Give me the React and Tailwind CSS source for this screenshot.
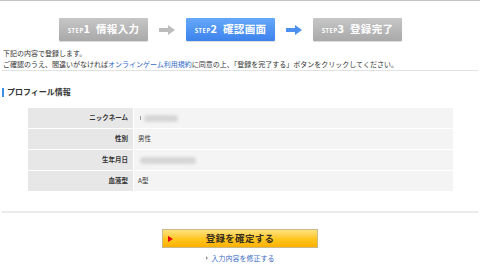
import React from 'react';

const font = { fontFamily: '"Noto Sans CJK JP", "Noto Sans", sans-serif' };

function Arrow({ color }) {
  return (
    <svg width="16" height="10" viewBox="0 0 16 10" className="block">
      <path d="M0 3h9V0l7 5-7 5V7H0z" fill={color} />
    </svg>
  );
}

function Step({ n, label, active }) {
  return (
    <div
      className={`w-[89px] h-[23px] flex items-center justify-center gap-[6px] text-white font-bold rounded-[1px] shadow-[0_1px_1px_rgba(0,0,0,0.15)] ${
        active
          ? 'bg-gradient-to-b from-[#66a8fa] to-[#3c82ec]'
          : 'bg-gradient-to-b from-[#c6c6c6] to-[#a9a9a9]'
      }`}
    >
      <span className="flex items-baseline">
        <span className="text-[5.5px] tracking-[0.5px]">STEP</span>
        <span className="text-[11px] leading-none">{n}</span>
      </span>
      <span className="text-[10.5px] leading-none tracking-[0.3px]">{label}</span>
    </div>
  );
}

const rows = [
  { label: 'ニックネーム', blur: 'w-[34px]', mark: true },
  { label: '性別', value: '男性' },
  { label: '生年月日', blur: 'w-[56px]' },
  { label: '血液型', value: 'A型' },
];

export default function App() {
  return (
    <div className="w-[480px] h-[271px] bg-white overflow-hidden text-[#333]" style={font}>
      <div className="h-px bg-[#c4c4c4]" />

      {/* steps */}
      <div className="flex items-center justify-center mt-[17px] gap-[11px] pr-[19px]">
        <Step n="1" label="情報入力" />
        <Arrow color="#bdbdbd" />
        <Step n="2" label="確認画面" active />
        <Arrow color="#4b90ee" />
        <Step n="3" label="登録完了" />
      </div>

      {/* notice */}
      <div className="mx-[2px] mt-[7px] text-[7px] leading-[11px] pl-px border-b border-[#e2e2e2]">
        <p>下記の内容で登録します。</p>
        <p>
          ご確認のうえ、間違いがなければ
          <span className="text-[#2e68c8]">オンラインゲーム利用規約</span>
          に同意の上、「登録を完了する」ボタンをクリックしてください。
        </p>
      </div>

      {/* heading */}
      <div className="mt-[16px] ml-[2px] flex items-center gap-[3px]">
        <span className="w-[2px] h-[9px] bg-[#3f8fe8]" />
        <span className="text-[8px] leading-[10px] font-bold">プロフィール情報</span>
      </div>

      {/* table */}
      <div className="ml-[28px] w-[425px] mt-[11px] flex flex-col gap-px">
        {rows.map((r) => (
          <div key={r.label} className="flex h-[20px]">
            <div className="w-[105px] bg-[#e7e7e7] flex items-center justify-end pr-[5px] text-[6.5px] font-bold">
              {r.label}
            </div>
            <div className="flex-1 ml-px bg-[#f4f4f4] flex items-center pl-[4px] text-[6.5px]">
              {r.value}
              {r.mark && <span className="w-px h-[4px] bg-[#999] mr-[3px] ml-[2px]" />}
              {r.blur && (
                <span className={`${r.blur} h-[7px] rounded-sm bg-[#d6d6d6] blur-[1.5px] ${r.mark ? '' : 'ml-[2px]'}`} />
              )}
            </div>
          </div>
        ))}
      </div>

      <div className="mx-[2px] mt-[20px] h-[2px] bg-[#ebebeb]" />

      {/* actions */}
      <div className="flex flex-col items-center">
        <button className="mt-[16px] w-[156px] h-[19px] relative flex items-center justify-center border border-[#c9b98a] bg-gradient-to-b from-[#ffe27a] via-[#ffc81f] to-[#ffb000] text-[9.5px] font-bold text-[#3a3020] tracking-[0.3px]">
          <span className="absolute left-[5px] top-1/2 -translate-y-1/2 w-0 h-0 border-y-[3px] border-y-transparent border-l-[5px] border-l-[#e60012]" />
          登録を確定する
        </button>
        <div className="mt-[5px] flex items-center gap-[4px] text-[7px] leading-[10px] text-[#3a6cc4]">
          <span className="w-0 h-0 border-y-[2px] border-y-transparent border-l-[2px] border-l-[#999]" />
          入力内容を修正する
        </div>
      </div>
    </div>
  );
}
